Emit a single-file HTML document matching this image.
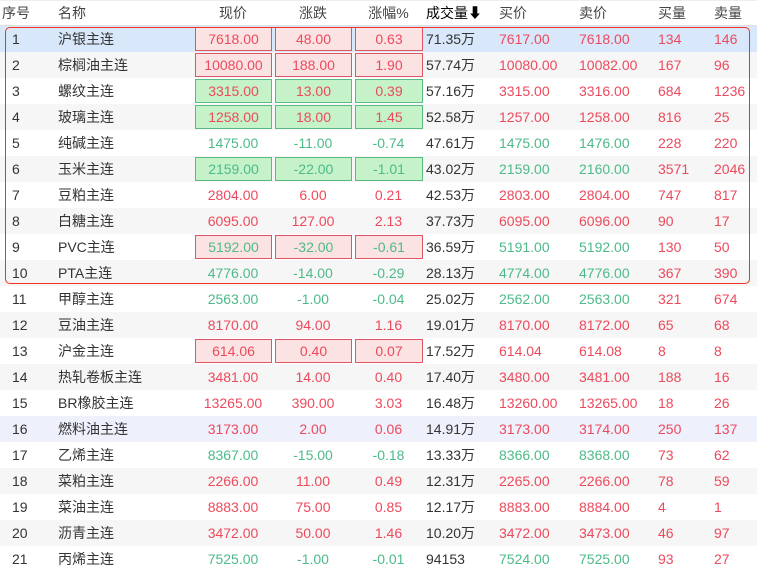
<!DOCTYPE html>
<html><head><meta charset="utf-8"><style>
body{margin:0;width:757px;height:571px;overflow:hidden;background:#fff;font-family:"Liberation Sans","Noto Sans CJK SC",sans-serif;font-size:14px;color:#333;position:relative}
table{border-collapse:collapse;table-layout:fixed;width:757px;position:absolute;left:0;top:0}
td,th{padding:0;white-space:nowrap;overflow:hidden}
th{height:24px;font-weight:normal;color:#444;text-align:left;border-bottom:1px solid #e0e0e0;border-top:1px solid #eee}
td{height:26px}
.c1{padding-left:12px}.c2{padding-left:6px}
.c6,.c7,.c8,.c9,.c10{padding-left:2px}
.p{text-align:center}
.b{margin:1px 1px 1px 2px;height:24px;box-sizing:border-box;border:1px solid;line-height:22px;text-align:center}
.rb{background:#fce3e3;border-color:#e05563}
.gb{background:#c5f2c8;border-color:#5aba84}
.r{color:#ec4a5c}.g{color:#4dba88}
tr.e td{background:#f6f6f6}
tr.s td{background:#d8e7f9}
tr.h td{background:#eef0fc}
#ob{position:absolute;left:5px;top:27px;width:745px;height:257px;border:1px solid #ee3322;border-radius:5px;box-sizing:border-box;z-index:5}
</style></head><body>
<table>
<colgroup><col style="width:52px"><col style="width:141px"><col style="width:80px"><col style="width:80px"><col style="width:71px"><col style="width:73px"><col style="width:80px"><col style="width:79px"><col style="width:56px"><col style="width:45px"></colgroup>
<tr><th style="padding-left:2px">序号</th><th class="c2">名称</th><th class="p">现价</th><th class="p">涨跌</th><th class="p">涨幅%</th><th class="c6" style="color:#000">成交量<b>⬇</b></th><th class="c7">买价</th><th class="c8">卖价</th><th class="c9">买量</th><th class="c10">卖量</th></tr>
<tr class="s"><td class="c1">1</td><td class="c2">沪银主连</td><td><div class="b rb r">7618.00</div></td><td><div class="b rb r">48.00</div></td><td><div class="b rb r">0.63</div></td><td class="c6">71.35万</td><td class="c7 r">7617.00</td><td class="c8 r">7618.00</td><td class="c9 r">134</td><td class="c10 r">146</td></tr>
<tr class="e"><td class="c1">2</td><td class="c2">棕榈油主连</td><td><div class="b rb r">10080.00</div></td><td><div class="b rb r">188.00</div></td><td><div class="b rb r">1.90</div></td><td class="c6">57.74万</td><td class="c7 r">10080.00</td><td class="c8 r">10082.00</td><td class="c9 r">167</td><td class="c10 r">96</td></tr>
<tr><td class="c1">3</td><td class="c2">螺纹主连</td><td><div class="b gb r">3315.00</div></td><td><div class="b gb r">13.00</div></td><td><div class="b gb r">0.39</div></td><td class="c6">57.16万</td><td class="c7 r">3315.00</td><td class="c8 r">3316.00</td><td class="c9 r">684</td><td class="c10 r">1236</td></tr>
<tr class="e"><td class="c1">4</td><td class="c2">玻璃主连</td><td><div class="b gb r">1258.00</div></td><td><div class="b gb r">18.00</div></td><td><div class="b gb r">1.45</div></td><td class="c6">52.58万</td><td class="c7 r">1257.00</td><td class="c8 r">1258.00</td><td class="c9 r">816</td><td class="c10 r">25</td></tr>
<tr><td class="c1">5</td><td class="c2">纯碱主连</td><td class="p g">1475.00</td><td class="p g">-11.00</td><td class="p g">-0.74</td><td class="c6">47.61万</td><td class="c7 g">1475.00</td><td class="c8 g">1476.00</td><td class="c9 r">228</td><td class="c10 r">220</td></tr>
<tr class="e"><td class="c1">6</td><td class="c2">玉米主连</td><td><div class="b gb g">2159.00</div></td><td><div class="b gb g">-22.00</div></td><td><div class="b gb g">-1.01</div></td><td class="c6">43.02万</td><td class="c7 g">2159.00</td><td class="c8 g">2160.00</td><td class="c9 r">3571</td><td class="c10 r">2046</td></tr>
<tr><td class="c1">7</td><td class="c2">豆粕主连</td><td class="p r">2804.00</td><td class="p r">6.00</td><td class="p r">0.21</td><td class="c6">42.53万</td><td class="c7 r">2803.00</td><td class="c8 r">2804.00</td><td class="c9 r">747</td><td class="c10 r">817</td></tr>
<tr class="e"><td class="c1">8</td><td class="c2">白糖主连</td><td class="p r">6095.00</td><td class="p r">127.00</td><td class="p r">2.13</td><td class="c6">37.73万</td><td class="c7 r">6095.00</td><td class="c8 r">6096.00</td><td class="c9 r">90</td><td class="c10 r">17</td></tr>
<tr><td class="c1">9</td><td class="c2">PVC主连</td><td><div class="b rb g">5192.00</div></td><td><div class="b rb g">-32.00</div></td><td><div class="b rb g">-0.61</div></td><td class="c6">36.59万</td><td class="c7 g">5191.00</td><td class="c8 g">5192.00</td><td class="c9 r">130</td><td class="c10 r">50</td></tr>
<tr class="e"><td class="c1">10</td><td class="c2">PTA主连</td><td class="p g">4776.00</td><td class="p g">-14.00</td><td class="p g">-0.29</td><td class="c6">28.13万</td><td class="c7 g">4774.00</td><td class="c8 g">4776.00</td><td class="c9 r">367</td><td class="c10 r">390</td></tr>
<tr><td class="c1">11</td><td class="c2">甲醇主连</td><td class="p g">2563.00</td><td class="p g">-1.00</td><td class="p g">-0.04</td><td class="c6">25.02万</td><td class="c7 g">2562.00</td><td class="c8 g">2563.00</td><td class="c9 r">321</td><td class="c10 r">674</td></tr>
<tr class="e"><td class="c1">12</td><td class="c2">豆油主连</td><td class="p r">8170.00</td><td class="p r">94.00</td><td class="p r">1.16</td><td class="c6">19.01万</td><td class="c7 r">8170.00</td><td class="c8 r">8172.00</td><td class="c9 r">65</td><td class="c10 r">68</td></tr>
<tr><td class="c1">13</td><td class="c2">沪金主连</td><td><div class="b rb r">614.06</div></td><td><div class="b rb r">0.40</div></td><td><div class="b rb r">0.07</div></td><td class="c6">17.52万</td><td class="c7 r">614.04</td><td class="c8 r">614.08</td><td class="c9 r">8</td><td class="c10 r">8</td></tr>
<tr class="e"><td class="c1">14</td><td class="c2">热轧卷板主连</td><td class="p r">3481.00</td><td class="p r">14.00</td><td class="p r">0.40</td><td class="c6">17.40万</td><td class="c7 r">3480.00</td><td class="c8 r">3481.00</td><td class="c9 r">188</td><td class="c10 r">16</td></tr>
<tr><td class="c1">15</td><td class="c2">BR橡胶主连</td><td class="p r">13265.00</td><td class="p r">390.00</td><td class="p r">3.03</td><td class="c6">16.48万</td><td class="c7 r">13260.00</td><td class="c8 r">13265.00</td><td class="c9 r">18</td><td class="c10 r">26</td></tr>
<tr class="h"><td class="c1">16</td><td class="c2">燃料油主连</td><td class="p r">3173.00</td><td class="p r">2.00</td><td class="p r">0.06</td><td class="c6">14.91万</td><td class="c7 r">3173.00</td><td class="c8 r">3174.00</td><td class="c9 r">250</td><td class="c10 r">137</td></tr>
<tr><td class="c1">17</td><td class="c2">乙烯主连</td><td class="p g">8367.00</td><td class="p g">-15.00</td><td class="p g">-0.18</td><td class="c6">13.33万</td><td class="c7 g">8366.00</td><td class="c8 g">8368.00</td><td class="c9 r">73</td><td class="c10 r">62</td></tr>
<tr class="e"><td class="c1">18</td><td class="c2">菜粕主连</td><td class="p r">2266.00</td><td class="p r">11.00</td><td class="p r">0.49</td><td class="c6">12.31万</td><td class="c7 r">2265.00</td><td class="c8 r">2266.00</td><td class="c9 r">78</td><td class="c10 r">59</td></tr>
<tr><td class="c1">19</td><td class="c2">菜油主连</td><td class="p r">8883.00</td><td class="p r">75.00</td><td class="p r">0.85</td><td class="c6">12.17万</td><td class="c7 r">8883.00</td><td class="c8 r">8884.00</td><td class="c9 r">4</td><td class="c10 r">1</td></tr>
<tr class="e"><td class="c1">20</td><td class="c2">沥青主连</td><td class="p r">3472.00</td><td class="p r">50.00</td><td class="p r">1.46</td><td class="c6">10.20万</td><td class="c7 r">3472.00</td><td class="c8 r">3473.00</td><td class="c9 r">46</td><td class="c10 r">97</td></tr>
<tr><td class="c1">21</td><td class="c2">丙烯主连</td><td class="p g">7525.00</td><td class="p g">-1.00</td><td class="p g">-0.01</td><td class="c6">94153</td><td class="c7 g">7524.00</td><td class="c8 g">7525.00</td><td class="c9 r">93</td><td class="c10 r">27</td></tr>
</table>
<div id="ob"></div>
</body></html>
